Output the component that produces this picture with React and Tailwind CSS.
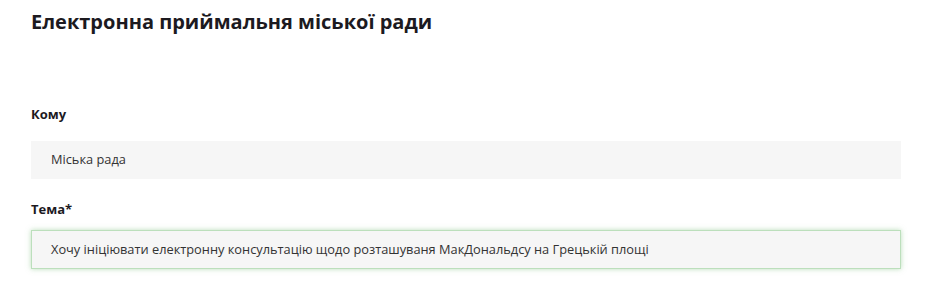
export default function App() {
  return (
    <div
      className="w-[932px] h-[300px] bg-white text-[#1c1a1f]"
      style={{ fontFamily: '"Open Sans", "Noto Sans", sans-serif' }}
    >
      <div className="px-[31px] pt-[9px]">
        <h1 className="text-[20px] leading-[26px] font-bold">
          Електронна приймальня міської ради
        </h1>

        <form className="mt-[70px] flex flex-col">
          <label className="text-[13px] leading-[18px] font-bold">Кому</label>
          <div className="mt-[18px] h-[38px] bg-[#f6f6f6] flex items-center pl-[20px] text-[12.8px] text-[#333]">
            Міська рада
          </div>

          <label className="mt-[21px] text-[13px] leading-[18px] font-bold">Тема*</label>
          <div className="mt-[12px] h-[39px] bg-[#f6f6f6] border border-[#bcdfbc] shadow-[0_0_5px_rgba(120,190,120,0.5)] flex items-center pl-[19px] text-[12.8px] text-[#333]">
            Хочу ініціювати електронну консультацію щодо розташуваня МакДональдсу на Грецькій площі
          </div>
        </form>
      </div>
    </div>
  );
}
